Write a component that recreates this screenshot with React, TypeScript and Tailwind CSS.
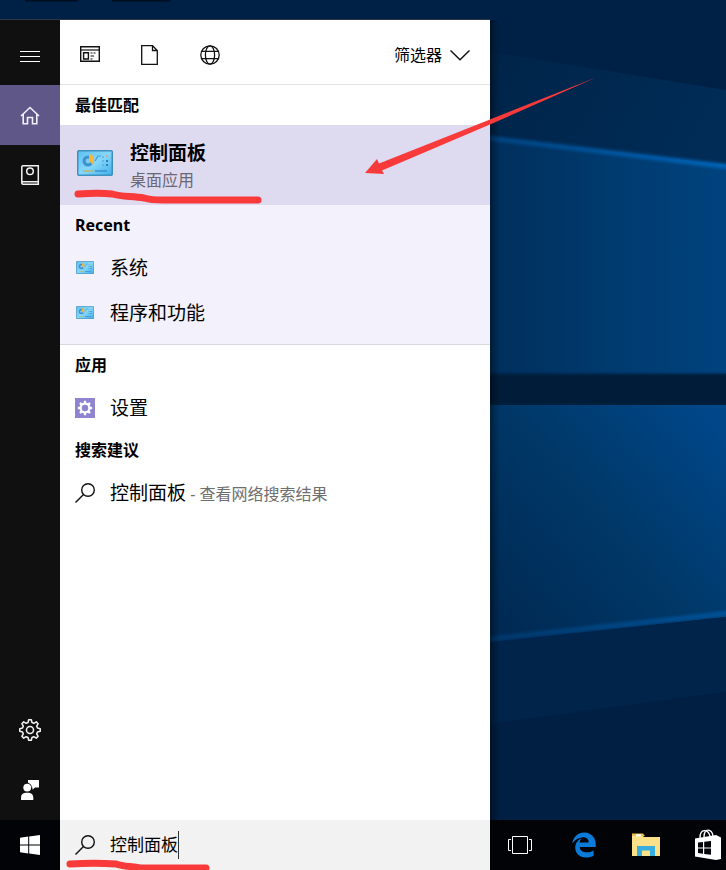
import { useState } from 'react'
import type { ReactNode } from 'react'
import { FaEdgeLegacy } from 'react-icons/fa6'

function Wallpaper() {
  return (
    <svg
      className="absolute inset-0 w-full h-full"
      viewBox="0 0 726 870"
      preserveAspectRatio="none"
      aria-hidden="true"
    >
      <defs>
        <linearGradient id="beam" x1="490" x2="726" y1="0" y2="0" gradientUnits="userSpaceOnUse">
          <stop offset="0" stopColor="#002f5c" />
          <stop offset="0.5" stopColor="#003a6e" />
          <stop offset="1" stopColor="#00437e" />
        </linearGradient>
        <linearGradient id="pane" x1="500" y1="620" x2="726" y2="430" gradientUnits="userSpaceOnUse">
          <stop offset="0" stopColor="#002a54" />
          <stop offset="0.5" stopColor="#003868" />
          <stop offset="1" stopColor="#00478a" />
        </linearGradient>
        <linearGradient id="edge" x1="490" x2="726" y1="0" y2="0" gradientUnits="userSpaceOnUse">
          <stop offset="0" stopColor="#00427f" />
          <stop offset="1" stopColor="#0464b8" />
        </linearGradient>
        <linearGradient id="shade" x1="490" x2="700" y1="50" y2="160" gradientUnits="userSpaceOnUse">
          <stop offset="0" stopColor="#002449" />
          <stop offset="1" stopColor="#002c56" />
        </linearGradient>
        <linearGradient id="cast" x1="490" x2="500" y1="0" y2="0" gradientUnits="userSpaceOnUse">
          <stop offset="0" stopColor="#000" stopOpacity="0.4" />
          <stop offset="1" stopColor="#000" stopOpacity="0" />
        </linearGradient>
        <filter id="soft" x="-10%" y="-50%" width="120%" height="200%">
          <feGaussianBlur stdDeviation="1.6" />
        </filter>
      </defs>
      <rect width="726" height="870" fill="#002146" />
      <path d="M490 52L726 90V400H490Z" fill="url(#shade)" />
      <path d="M490 137L726 165V374H490Z" fill="url(#beam)" />
      <path d="M480 137L740 168" stroke="url(#edge)" strokeWidth="5" filter="url(#soft)" />
      <rect x="480" y="374" width="260" height="31" fill="#001a38" filter="url(#soft)" />
      <path d="M490 405H726V617L490 642Z" fill="url(#pane)" />
      <path d="M480 640L740 612" stroke="url(#edge)" strokeWidth="5" opacity="0.6" filter="url(#soft)" />
      <path d="M490 643L726 617V692L490 724Z" fill="#00244a" />
      <path d="M490 724L726 692V820H490Z" fill="#001f43" />
      <rect x="490" y="20" width="10" height="800" fill="url(#cast)" />
      <path d="M25 0H78M112 0H170" stroke="#00060f" strokeWidth="3" opacity="0.7" />
      <path d="M0 19.5H490" stroke="#2a3546" strokeWidth="1" />
    </svg>
  )
}

function ControlPanelIcon({ className }: { className: string }) {
  return (
    <svg className={className} viewBox="0 0 36 26" aria-hidden="true">
      <defs>
        <linearGradient id="cp" x1="0" y1="0" x2="1" y2="1">
          <stop offset="0" stopColor="#5cc0f0" />
          <stop offset="0.5" stopColor="#86d8fb" />
          <stop offset="1" stopColor="#42aee8" />
        </linearGradient>
      </defs>
      <rect x="0.75" y="0.75" width="34.5" height="24.5" rx="1" fill="url(#cp)" stroke="#3f8fbf" strokeWidth="1.5" />
      <circle cx="11" cy="11" r="5.5" fill="#3d93d2" />
      <circle cx="11" cy="11" r="2.4" fill="#7cccf4" />
      <path d="M12 10V4a6 6 0 0 1 3 10.5z" fill="#f6b53c" />
      <path d="M18 11l3-5h3M25 7h2M25 11h2M25 15h2" fill="none" stroke="#4b9bd0" strokeWidth="1.2" />
      <path d="M29 11h2M29 15h2" stroke="#2f7fc0" strokeWidth="2" />
      <circle cx="30" cy="6" r="1" fill="#e0a060" />
      <path d="M6 21h10" stroke="#b9b96a" strokeWidth="1.5" />
      <path d="M18 21h12" stroke="#3a92d0" strokeWidth="1.5" />
    </svg>
  )
}

function SearchIcon() {
  return (
    <svg className="w-5 h-5 shrink-0" viewBox="0 0 20 20" fill="none" stroke="#111" strokeWidth="1.4" aria-hidden="true">
      <circle cx="13" cy="7" r="6.3" />
      <path d="M8.5 11.5L0.5 19.5" />
    </svg>
  )
}

// eight-toothed cog, used both in the rail and on the settings tile
const cogPath =
  'M8.2 3.2L8.8 .7H11.2L11.8 3.2L13.5 3.9L15.7 2.6L17.4 4.3L16.1 6.5L16.8 8.2L19.3 8.8V11.2L16.8 11.8L16.1 13.5L17.4 15.7L15.7 17.4L13.5 16.1L11.8 16.8L11.2 19.3H8.8L8.2 16.8L6.5 16.1L4.3 17.4L2.6 15.7L3.9 13.5L3.2 11.8L.7 11.2V8.8L3.2 8.2L3.9 6.5L2.6 4.3L4.3 2.6L6.5 3.9Z'

interface RailButtonProps {
  label: string
  active?: boolean
  children: ReactNode
}

function RailButton({ label, active, children }: RailButtonProps) {
  return (
    <button
      aria-label={label}
      className={`w-full h-[60px] flex items-center justify-center ${active ? 'bg-[#5f5788]' : 'hover:bg-[#2a2a2a]'}`}
    >
      {children}
    </button>
  )
}

function SideRail() {
  return (
    <nav className="w-[60px] shrink-0 bg-[#101010] flex flex-col">
      <button aria-label="菜单" className="h-[65px] pt-1.5 flex items-center justify-center">
        <svg className="w-5 h-5" viewBox="0 0 20 20" stroke="#fff" aria-hidden="true">
          <path d="M0 5.5H20M0 10.5H20M0 15.5H20" />
        </svg>
      </button>
      <RailButton label="主页" active>
        <svg className="w-5 h-5" viewBox="0 0 20 20" fill="none" stroke="#f2effc" strokeWidth="1.6" aria-hidden="true">
          <path d="M1 11L10 2.5L19 11M3.2 9.2V18.8H7.5V12.5H12.5V18.8H16.8V9.2" />
        </svg>
      </RailButton>
      <RailButton label="笔记本">
        <svg className="w-5 h-5" viewBox="0 0 20 20" fill="none" stroke="#f2f2f2" strokeWidth="1.5" aria-hidden="true">
          <path d="M3 .8H18.3V19.2H3A1.5 1.5 0 0 1 1.8 18V2A1.2 1.2 0 0 1 3 .8ZM2 16.8H18.3" />
          <circle cx="10" cy="6.3" r="3.3" />
        </svg>
      </RailButton>
      <div className="flex-1" />
      <RailButton label="设置">
        <svg className="w-[22px] h-[22px]" viewBox="0 0 20 20" fill="none" stroke="#f2f2f2" strokeWidth="1.4" strokeLinejoin="round" aria-hidden="true">
          <path d={cogPath} />
          <circle cx="10" cy="10" r="3.2" />
        </svg>
      </RailButton>
      <RailButton label="反馈">
        <svg className="w-5 h-5" viewBox="0 0 20 20" fill="#fff" aria-hidden="true">
          <path d="M8 0H19V7.5H15L12.5 9.8V7.5H11.8A5 5 0 0 0 8 2.8Z" />
          <circle cx="7.2" cy="7.6" r="3.9" />
          <path d="M1 20V17.5A5 5 0 0 1 5.5 12.7H9A5 5 0 0 1 13.3 17.5V20Z" />
        </svg>
      </RailButton>
    </nav>
  )
}

function FilterBar() {
  return (
    <div className="h-[65px] border-b border-[#e3e3e3] pt-1.5 pr-5 flex items-center">
      <button aria-label="应用" className="w-[60px] flex justify-center">
        <svg className="w-5 h-5" viewBox="0 0 20 20" fill="none" stroke="#111" aria-hidden="true">
          <path d="M.7 1.7H19.3V16.3H.7Z" strokeWidth="1.4" />
          <path d="M1 5H19" strokeWidth="1.2" />
          <path d="M3.6 7.7H8.4V14H3.6Z" strokeWidth="1.4" />
          <path d="M10.5 8H12.5M13.5 8H15.5M10.5 11H14M10.5 14H12.5" strokeWidth="1.2" />
        </svg>
      </button>
      <button aria-label="文档" className="w-[60px] flex justify-center">
        <svg className="w-5 h-5" viewBox="0 0 20 20" fill="none" stroke="#111" strokeWidth="1.3" aria-hidden="true">
          <path d="M1.7 .7H12.5L17.3 5.5V19.3H1.7ZM12.5 .7V5.5H17.3" />
        </svg>
      </button>
      <button aria-label="网页" className="w-[60px] flex justify-center">
        <svg className="w-5 h-5" viewBox="0 0 20 20" fill="none" stroke="#111" strokeWidth="1.3" aria-hidden="true">
          <circle cx="10" cy="10" r="9.2" />
          <ellipse cx="10" cy="10" rx="4.6" ry="9.2" />
          <path d="M1.8 6.3H18.2M1.8 13.7H18.2" />
        </svg>
      </button>
      <button className="ml-auto flex items-center gap-2 text-base leading-6">
        筛选器
        <svg className="w-5 h-5" viewBox="0 0 20 20" fill="none" stroke="#111" strokeWidth="1.5" aria-hidden="true">
          <path d="M.5 5.5L10 14.8L19.5 5.5" />
        </svg>
      </button>
    </div>
  )
}

function GroupTitle({ children }: { children: ReactNode }) {
  return <h2 className="h-10 px-[15px] flex items-center text-base font-bold">{children}</h2>
}

function ResultRow({ icon, children }: { icon: ReactNode; children: ReactNode }) {
  return (
    <button className="w-full h-[45px] px-[15px] flex items-center gap-[15px] text-left text-[19px] leading-7 hover:bg-black/5">
      <span className="w-5 flex justify-center">{icon}</span>
      <span>{children}</span>
    </button>
  )
}

function BestMatch() {
  return (
    <div className="relative z-10">
      <button className="w-full h-20 pl-[17px] flex items-center gap-[17px] text-left bg-[#dedaf0]">
        <ControlPanelIcon className="w-9 h-[26px] mb-1" />
        <span className="flex flex-col pt-1">
          <span className="text-[19px] leading-[27px] font-bold">控制面板</span>
          <span className="text-base leading-[27px] text-[#6a6775]">桌面应用</span>
        </span>
      </button>
      {/* hand-drawn marks over the result */}
      <svg
        className="absolute left-0 top-0 w-[430px] h-20 overflow-visible pointer-events-none"
        viewBox="0 0 430 80"
        aria-hidden="true"
      >
        <path
          d="M18 69C32 68 44 68 52 69C62 72 72 71 84 73C94 76 102 75 112 75H198"
          fill="none"
          stroke="#f93a3a"
          strokeWidth="7"
          strokeLinecap="round"
          strokeLinejoin="round"
        />
        <path d="M305 48L317 34L319 38.5L430 -5.5L536 -47.5L430 -.5L322 45.5L324 49Z" fill="#f93a3a" />
      </svg>
    </div>
  )
}

function SearchBox() {
  const [query, setQuery] = useState('控制面板')

  return (
    <label className="relative w-[430px] shrink-0 bg-[#f2f2f2] pl-[15px] flex items-center">
      <SearchIcon />
      <input
        aria-label="搜索"
        value={query}
        onChange={(e) => setQuery(e.target.value)}
        className="field-sizing-content ml-[15px] p-0 text-[17px] leading-7 bg-transparent caret-transparent outline-none"
      />
      <span className="w-px h-7 bg-[#333]" />
      <svg
        className="absolute left-0 bottom-0 w-40 h-3 pointer-events-none"
        viewBox="0 0 160 12"
        aria-hidden="true"
      >
        <path
          d="M10 6C26 5 42 5 56 6C64 9 72 8 80 10H146"
          fill="none"
          stroke="#f93a3a"
          strokeWidth="7"
          strokeLinecap="round"
        />
      </svg>
    </label>
  )
}

function Taskbar() {
  return (
    <footer className="relative h-[50px] bg-[#010307] flex">
      <button aria-label="开始" className="w-[60px] shrink-0 flex items-center justify-center">
        <svg className="w-5 h-5" viewBox="0 0 20 20" fill="#fff" aria-hidden="true">
          <path d="M0 2.8L8.2 1.6V9.4H0ZM9.2 1.4L20 0V9.4H9.2ZM0 10.5H8.2V18.4L0 17.2ZM9.2 10.5H20V20L9.2 18.6Z" />
        </svg>
      </button>
      <SearchBox />
      <div className="flex-1 min-w-0 overflow-hidden flex pl-px">
        <button aria-label="任务视图" className="w-[62px] shrink-0 flex items-center justify-center">
          <svg className="w-7 h-5" viewBox="0 0 28 20" fill="none" stroke="#fff" aria-hidden="true">
            <path d="M4.5 1.5H19.5V18.5H4.5ZM3 4.5H.5V15.5H3M21 4.5H23.5V15.5H21" />
          </svg>
        </button>
        <button aria-label="Edge" className="w-[62px] shrink-0 flex items-center justify-center">
          <FaEdgeLegacy className="w-[26px] h-[26px] text-[#0a7bd8]" />
        </button>
        <button aria-label="文件资源管理器" className="w-[62px] shrink-0 flex items-center justify-center">
          <svg className="w-7 h-[26px]" viewBox="0 0 28 26" aria-hidden="true">
            <path d="M0 2.5H9.5L12 5H28V24H0Z" fill="#fbe08a" />
            <path d="M0 1.5H11L13 4H0Z" fill="#f0c14b" />
            <rect x="4" y="2.3" width="5" height="2" fill="#fff" />
            <path d="M5 24V14H23V24H18V18.5H10V24Z" fill="#38aee0" />
          </svg>
        </button>
        <button aria-label="应用商店" className="w-[62px] shrink-0 flex items-center justify-center">
          <svg className="w-7 h-8" viewBox="0 0 28 32" aria-hidden="true">
            <path d="M6 9C6 -1 14 0 16 7M10 8C10 -2 18 0 19 7" fill="none" stroke="#fff" strokeWidth="1.4" />
            <path d="M1 9.5L22 6L27 8.5V30L22 31L1 27.5Z" fill="#fff" />
            <path d="M4 13.6L9 13V18.4H4ZM10.2 12.8L17 12V18.4H10.2ZM4 19.5H9V24.7L4 24ZM10.2 19.5H17V25.8L10.2 24.9Z" fill="#010307" />
          </svg>
        </button>
      </div>
    </footer>
  )
}

export default function App() {
  return (
    <div className="relative min-h-screen overflow-hidden flex flex-col text-black font-['Noto_Sans','Noto_Sans_CJK_SC',sans-serif]">
      <Wallpaper />
      <div className="relative flex-1 pt-5 flex">
        <SideRail />
        <main className="w-[430px] shrink-0 bg-white">
          <FilterBar />
          <GroupTitle>最佳匹配</GroupTitle>
          <BestMatch />
          <section className="bg-[#f3f1fb] pb-[9px] border-b border-[#d9d8df]">
            <GroupTitle>Recent</GroupTitle>
            <ResultRow icon={<ControlPanelIcon className="w-[18px] h-[13px]" />}>系统</ResultRow>
            <ResultRow icon={<ControlPanelIcon className="w-[18px] h-[13px]" />}>程序和功能</ResultRow>
          </section>
          <section>
            <GroupTitle>应用</GroupTitle>
            <ResultRow
              icon={
                <svg className="w-5 h-5 bg-[#8e84cf]" viewBox="-3 -3 26 26" aria-hidden="true">
                  <path d={cogPath} fill="#fff" />
                  <circle cx="10" cy="10" r="4.2" fill="#8e84cf" />
                </svg>
              }
            >
              设置
            </ResultRow>
            <GroupTitle>搜索建议</GroupTitle>
            <ResultRow icon={<SearchIcon />}>
              控制面板<span className="text-base text-[#6e6e6e]"> - 查看网络搜索结果</span>
            </ResultRow>
          </section>
        </main>
      </div>
      <Taskbar />
    </div>
  )
}
